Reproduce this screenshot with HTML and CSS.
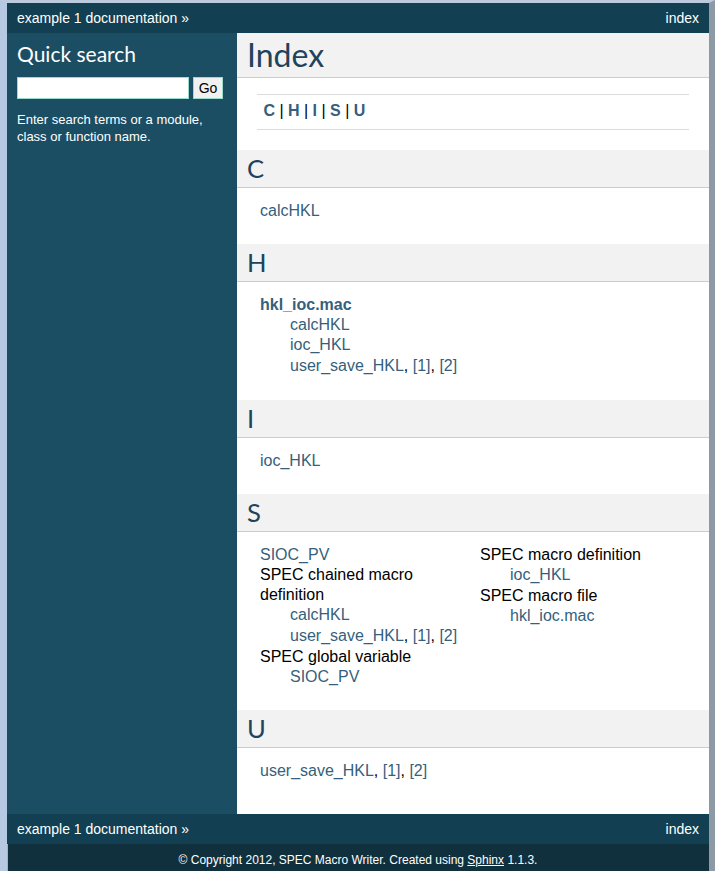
FILE: index.html
```html
<!DOCTYPE html>
<html>
<head>
<meta charset="utf-8">
<title>Index — example 1 documentation</title>
<link rel="stylesheet" href="styles.css">
</head>
<body>
<div class="window">
  <div class="related">
    <span><a href="#">example 1 documentation</a> »</span>
    <a href="#">index</a>
  </div>
  <div class="document">
    <div class="sidebar">
      <h3>Quick search</h3>
      <form class="search"><input type="text" class="q"><button type="button" class="go">Go</button></form>
      <p class="searchtip">Enter search terms or a module, class or function name.</p>
    </div>
    <div class="body">
      <h1>Index</h1>
      <div class="jumpbox"><a href="#C"><strong>C</strong></a> | <a href="#H"><strong>H</strong></a> | <a href="#I"><strong>I</strong></a> | <a href="#S"><strong>S</strong></a> | <a href="#U"><strong>U</strong></a></div>

      <h2 id="C">C</h2>
      <div class="indextable">
        <dl class="col"><dt><a href="#">calcHKL</a></dt></dl>
      </div>

      <h2 id="H">H</h2>
      <div class="indextable">
        <dl class="col">
          <dt><a href="#"><strong>hkl_ioc.mac</strong></a></dt>
          <dd><dl>
            <dt><a href="#">calcHKL</a></dt>
            <dt><a href="#">ioc_HKL</a></dt>
            <dt><a href="#">user_save_HKL</a>, <a href="#">[1]</a>, <a href="#">[2]</a></dt>
          </dl></dd>
        </dl>
      </div>

      <h2 id="I">I</h2>
      <div class="indextable">
        <dl class="col"><dt><a href="#">ioc_HKL</a></dt></dl>
      </div>

      <h2 id="S">S</h2>
      <div class="indextable">
        <dl class="col">
          <dt><a href="#">SIOC_PV</a></dt>
          <dt>SPEC chained macro definition</dt>
          <dd><dl>
            <dt><a href="#">calcHKL</a></dt>
            <dt><a href="#">user_save_HKL</a>, <a href="#">[1]</a>, <a href="#">[2]</a></dt>
          </dl></dd>
          <dt>SPEC global variable</dt>
          <dd><dl>
            <dt><a href="#">SIOC_PV</a></dt>
          </dl></dd>
        </dl>
        <dl class="col">
          <dt>SPEC macro definition</dt>
          <dd><dl>
            <dt><a href="#">ioc_HKL</a></dt>
          </dl></dd>
          <dt>SPEC macro file</dt>
          <dd><dl>
            <dt><a href="#">hkl_ioc.mac</a></dt>
          </dl></dd>
        </dl>
      </div>

      <h2 id="U">U</h2>
      <div class="indextable">
        <dl class="col"><dt><a href="#">user_save_HKL</a>, <a href="#">[1]</a>, <a href="#">[2]</a></dt></dl>
      </div>
    </div>
  </div>
  <div class="related">
    <span><a href="#">example 1 documentation</a> »</span>
    <a href="#">index</a>
  </div>
  <div class="footer">© Copyright 2012, SPEC Macro Writer. Created using <a href="#">Sphinx</a> 1.1.3.</div>
</div>
</body>
</html>
```
FILE: styles.css
```css
html, body {
  margin: 0;
  padding: 0;
}
body {
  background: #11303d;
  font-family: "Liberation Sans", Arial, sans-serif;
  font-size: 16px;
  color: #000;
  height: 871px;
  overflow: hidden;
}
.window {
  border-top: 3px solid #bccadd;
  border-left: 7px solid #b7c9e2;
  border-right: 6px solid #8e99a6;
  background: #11303d;
  min-height: 868px;
  box-shadow: inset 1px 0 0 #9fb2cf;
}
a {
  text-decoration: none;
}
.related {
  background: #133f52;
  color: #fff;
  font-size: 14px;
  line-height: 30px;
  height: 30px;
  display: flex;
  justify-content: space-between;
  padding: 0 10px;
}
.related a {
  color: #fff;
}
.document {
  display: flex;
  background: #1c4e63;
}
.sidebar {
  width: 230px;
  flex: none;
  box-sizing: border-box;
  padding: 10px 5px 0 10px;
  color: #fff;
}
.sidebar h3 {
  margin: 0;
  font-family: Lato, "Open Sans", sans-serif;
  font-weight: normal;
  font-size: 21px;
  line-height: 22px;
  color: #fff;
}
.search {
  margin: 12px 0 0 0;
  display: flex;
  gap: 4px;
}
.q {
  box-sizing: border-box;
  width: 172px;
  height: 22px;
  margin: 0;
  border: 1px solid #98dbcc;
  background: #fff;
  padding: 0 2px;
  font-family: "Liberation Sans", Arial, sans-serif;
  font-size: 14px;
}
.go {
  box-sizing: border-box;
  width: 30px;
  height: 22px;
  margin: 0;
  padding: 0;
  border: 1px solid #98dbcc;
  background: #f1f1f1;
  color: #000;
  font-family: "Liberation Sans", Arial, sans-serif;
  font-size: 14px;
  line-height: 20px;
}
.searchtip {
  margin: 13px 0 0 0;
  font-size: 13px;
  line-height: 16.5px;
  color: #fff;
}
.body {
  flex: 1;
  background: #fff;
  padding: 0 20px 30px 20px;
  min-width: 0;
}
.body h1, .body h2 {
  font-family: Lato, "Open Sans", sans-serif;
  font-weight: normal;
  color: #20435c;
  background: #f2f2f2;
  border-bottom: 1px solid #ccc;
  margin: 20px -20px 10px -20px;
  padding: 3px 0 3px 10px;
}
.body h1 {
  margin-top: 0;
  font-size: 32px;
  line-height: 38px;
}
.body h2 {
  font-size: 25.6px;
  line-height: 31px;
}
.jumpbox {
  border-top: 1px solid #ddd;
  border-bottom: 1px solid #ddd;
  margin: 16px 0;
  padding: 6.4px;
  line-height: 20.8px;
}
.jumpbox a {
  color: #355f7c;
}
.indextable {
  display: grid;
  grid-template-columns: 220px 1fr;
  padding: 3px 0 3px 3px;
}
.indextable dl {
  margin: 0;
}
.indextable .col {
  padding-right: 4px;
}
.indextable dt {
  line-height: 20px;
}
.indextable dd {
  margin: 0 0 0 30px;
  line-height: 20.8px;
}
.indextable dd dt {
  line-height: 20.8px;
}
.indextable a {
  color: #355f7c;
}
.footer {
  color: #fff;
  text-align: center;
  font-size: 12px;
  padding: 9px 0;
}
.footer a {
  color: #fff;
  text-decoration: underline;
}
```
